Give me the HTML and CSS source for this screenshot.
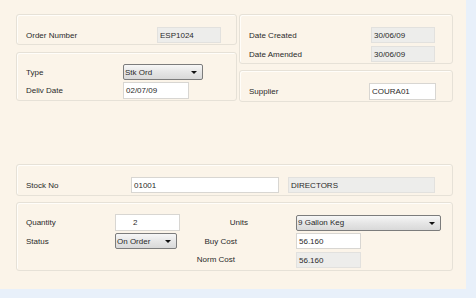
FILE: index.html
```html
<!DOCTYPE html>
<html>
<head>
<meta charset="utf-8">
<link rel="stylesheet" href="styles.css">
</head>
<body>
<div class="panel">
  <div class="top">
    <div class="col col-left">
      <div class="box box-order">
        <div class="row">
          <span class="lbl w131">Order Number</span>
          <div class="fld ro w64">ESP1024</div>
        </div>
      </div>
      <div class="box box-type">
        <div class="row">
          <span class="lbl w97">Type</span>
          <div class="fld sel w80">Stk Ord<span class="arrow"></span></div>
        </div>
        <div class="row">
          <span class="lbl w97">Deliv Date</span>
          <div class="fld inp w66 h17">02/07/09</div>
        </div>
      </div>
    </div>
    <div class="col col-right">
      <div class="box box-dates">
        <div class="row">
          <span class="lbl w122">Date Created</span>
          <div class="fld ro w64">30/06/09</div>
        </div>
        <div class="row">
          <span class="lbl w122">Date Amended</span>
          <div class="fld ro w64">30/06/09</div>
        </div>
      </div>
      <div class="box box-supp">
        <div class="row">
          <span class="lbl w120">Supplier</span>
          <div class="fld inp w67 h17">COURA01</div>
        </div>
      </div>
    </div>
  </div>

  <div class="box box-stock">
    <div class="row">
      <span class="lbl w105">Stock No</span>
      <div class="fld inp w148">01001</div>
      <div class="fld ro w147 ml9">DIRECTORS</div>
    </div>
  </div>

  <div class="box box-qty">
    <div class="qgrid">
      <span class="lbl">Quantity</span>
      <div class="fld inp w65 h17 qty">2</div>
      <span class="lbl mid units">Units</span>
      <div class="fld sel w145">9 Gallon Keg<span class="arrow"></span></div>

      <span class="lbl">Status</span>
      <div class="fld sel w62">On Order<span class="arrow"></span></div>
      <span class="lbl mid buy">Buy Cost</span>
      <div class="fld inp w65">56.160</div>

      <span></span>
      <span></span>
      <span class="lbl mid norm">Norm Cost</span>
      <div class="fld ro w65">56.160</div>
    </div>
  </div>
</div>
</body>
</html>
```
FILE: styles.css
```css
* { box-sizing: border-box; }
html, body { margin: 0; padding: 0; }
body {
  background: #e8f0fa;
  width: 476px;
  height: 298px;
  font-family: "Liberation Sans", Arial, sans-serif;
  font-size: 8px;
  color: #2a2a2a;
}
.panel {
  width: 466px;
  height: 289px;
  background: #fbf4e9;
  padding: 14px 0 0 16px;
}
.top {
  display: flex;
  gap: 2px;
  align-items: flex-start;
}
.col { display: flex; flex-direction: column; }
.col-left { width: 221px; gap: 7px; }
.col-right { width: 214px; gap: 6px; }

.box {
  border: 1px solid #e6e1d7;
  border-radius: 3px;
  box-shadow: inset 1px 1px 0 #fffdf9;
  padding-left: 9px;
  display: flex;
  flex-direction: column;
}
.box-order { height: 31px; padding-top: 12px; }
.box-type { height: 49px; padding-top: 11px; gap: 2px; }
.box-dates { height: 50px; padding-top: 12px; gap: 3px; }
.box-supp { height: 32px; padding-top: 12px; }
.box-stock { width: 437px; height: 32px; padding-top: 12px; margin-top: 62px; }
.box-qty { width: 437px; height: 69px; padding-top: 11px; margin-top: 6px; }

.row { display: flex; align-items: center; }
.lbl { white-space: nowrap; }
.w97 { width: 97px; }
.w105 { width: 105px; }
.w120 { width: 120px; }
.w122 { width: 122px; }
.w131 { width: 131px; }

.fld {
  height: 16px;
  display: flex;
  align-items: center;
  padding-left: 2px;
  position: relative;
  white-space: nowrap;
}
.h17 { height: 17px; }
.w62 { width: 62px; }
.w64 { width: 64px; }
.w65 { width: 65px; }
.w66 { width: 66px; }
.w67 { width: 67px; }
.w80 { width: 80px; }
.w145 { width: 145px; }
.w147 { width: 147px; }
.w148 { width: 148px; }
.ml9 { margin-left: 9px; }

.ro { background: #ededeb; border: 1px solid #e2e1de; }
.inp { background: #ffffff; border: 1px solid #d8d6d2; }
.sel {
  border: 1px solid #7c7c7c;
  border-radius: 2px;
  background: linear-gradient(#f7f7f7, #e6e6e6 50%, #d9d9d9);
  padding-left: 1px;
}
.arrow {
  position: absolute;
  right: 5px;
  top: 6px;
  width: 0;
  height: 0;
  border-left: 3px solid transparent;
  border-right: 3px solid transparent;
  border-top: 3px solid #111;
}
.qty { padding-left: 17px; }

.qgrid {
  display: grid;
  grid-template-columns: 89px 65px 116px 145px;
  grid-template-rows: 17px 16px 16px;
  row-gap: 2px;
  align-items: center;
}
.qgrid .norm { margin-top: 1px; }
.qgrid .norm + .fld { margin-top: 2px; }
.mid { justify-self: end; }
.units { margin-right: 48px; }
.buy { margin-right: 59px; }
.norm { margin-right: 61px; }
```
